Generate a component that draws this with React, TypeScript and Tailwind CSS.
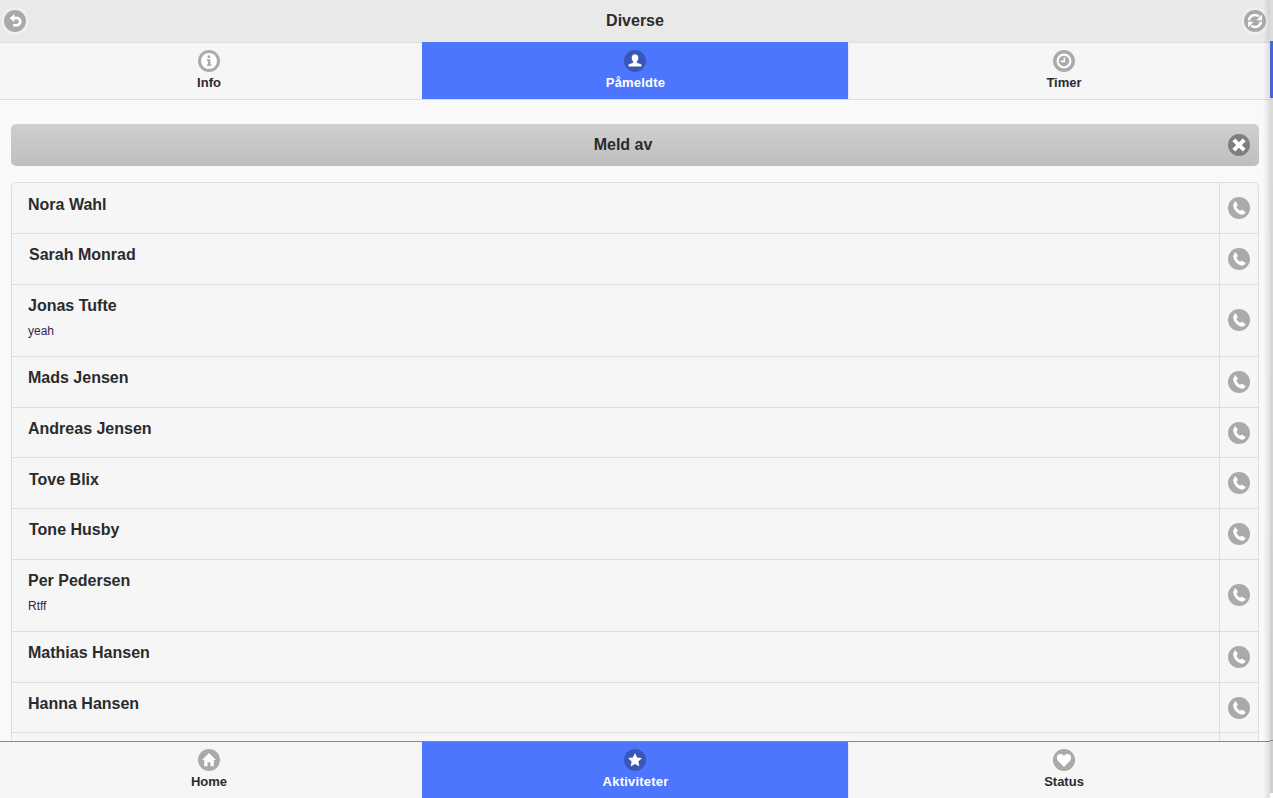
import type { ReactNode } from 'react';

const font = '[font-family:"Liberation_Sans",Arial,sans-serif]';

const icons: Record<string, ReactNode> = {
  back: (
    <path d="M5.600 8.300 10.400 4v2.700h1.900c3.200 0 5.300 2.100 5.300 4.900 0 2.900-2.100 5-5.300 5H9v-2.600h3.300c1.600 0 2.600-1 2.600-2.400s-1-2.400-2.600-2.400h-1.900v2.800z" fill="#fff" />
  ),
  refresh: (
    <>
      <path d="M5 10.400a6.100 6.100 0 0 1 9.900-4" fill="none" stroke="#fff" strokeWidth="2.400" />
      <path d="M18 4.600v5.600h-5.600z" fill="#fff" />
      <path d="M17 11.600a6.100 6.100 0 0 1-9.900 4" fill="none" stroke="#fff" strokeWidth="2.400" />
      <path d="M4 17.400v-5.600h5.600z" fill="#fff" />
    </>
  ),
  info: (
    <>
      <circle cx="11" cy="11" r="8" fill="#fff" />
      <path d="M9.600 5.600h2.600v2.400H9.600zM8.900 9.200h3.500v5.200h1v1.700H8.900v-1.700h1v-3.500h-1z" fill="#aaa" />
    </>
  ),
  user: (
    <path d="M11 4.200c2 0 3.300 1.600 3.300 3.700 0 1.500-.6 2.800-1.500 3.500v1.200c0 .7 3.800 1 4.700 2.300v1.600h-13v-1.600c.9-1.300 4.700-1.600 4.700-2.300v-1.200c-.9-.7-1.500-2-1.500-3.500 0-2.100 1.300-3.700 3.300-3.700z" fill="#fff" />
  ),
  clock: (
    <>
      <circle cx="11" cy="11" r="6.400" fill="none" stroke="#fff" strokeWidth="2.200" />
      <path d="M11.400 7.400V11.400H7.800" fill="none" stroke="#fff" strokeWidth="1.600" />
    </>
  ),
  home: (
    <path d="M11 4 18 11h-2.200v6.200h-3.300v-4h-3v4H6.200v-6.200H4z" fill="#fff" />
  ),
  star: (
    <path d="m11 4 2.100 4.500 4.900.6-3.600 3.400.9 4.900-4.300-2.400-4.300 2.400.9-4.900L4 9.100l4.900-.6z" fill="#fff" />
  ),
  heart: (
    <path d="M11 18 4.900 11.700C3 9.600 3.500 5.500 7 5.100c1.800-.2 3.200.7 4 2 .8-1.300 2.200-2.200 4-2 3.500.4 4 4.500 2.100 6.600z" fill="#fff" />
  ),
  phone: (
    <path d="M6.300 4.600c.5-.4 1.100-.4 1.500.1l1.700 2.400c.3.500.3 1-.1 1.400l-.8.900c-.2.200-.2.400-.1.600.8 1.500 1.800 2.600 3.300 3.700.2.100.4.100.6-.1l.9-.7c.4-.3.900-.3 1.300 0l2.500 1.800c.5.400.5 1 .1 1.400-1.100 1.300-2.600 1.900-4.100 1.400-4.100-1.300-7.100-4.800-7.900-8.500-.3-1.200.2-2.400 1.600-3.800z" fill="#fff" />
  ),
  close: (
    <path d="M7.200 4.400 11 8.200l3.800-3.800 2.800 2.800-3.800 3.800 3.800 3.800-2.800 2.800-3.800-3.800-3.800 3.800-2.800-2.800 3.800-3.800-3.800-3.800z" fill="#fff" />
  ),
};

const Icon = ({ name, dark, fill }: { name: string; dark?: boolean; fill?: string }) => (
  <svg width="22" height="22" viewBox="0 0 22 22" className="block shrink-0">
    <circle cx="11" cy="11" r="11" fill={fill ?? (dark ? '#3a57b8' : '#aaaaaa')} />
    {icons[name]}
  </svg>
);

const Tab = ({ icon, label, className }: { icon: string; label: string; className: string }) => (
  <div className={`flex flex-col items-center text-[#2b2b33] ${className}`}>
    <Icon name={icon} />
    <span className="mt-[2px] text-[13px] leading-[18px] font-bold">{label}</span>
  </div>
);

const ActiveTab = ({ icon, label, className }: { icon: string; label: string; className: string }) => (
  <div className={`flex w-[427px] flex-col items-center border-r border-[#e4e9fb] bg-[#4d76ff] pl-[1px] text-white ${className}`}>
    <div className="-ml-[2px]">
      <Icon name={icon} dark />
    </div>
    <span className="mt-[2px] text-[13px] leading-[18px] font-bold tracking-[0.2px]">{label}</span>
  </div>
);

const people: { name: string; note?: string; h: string; pad: string }[] = [
  { name: 'Nora Wahl', h: 'h-[50px] pt-[12px]', pad: 'pl-[16px]' },
  { name: 'Sarah Monrad', h: 'h-[50px] pt-[11px]', pad: 'pl-[17px]' },
  { name: 'Jonas Tufte', note: 'yeah', h: 'h-[71px] pt-[11px]', pad: 'pl-[16px]' },
  { name: 'Mads Jensen', h: 'h-[50px] pt-[11px]', pad: 'pl-[16px]' },
  { name: 'Andreas Jensen', h: 'h-[49px] pt-[11px]', pad: 'pl-[16px]' },
  { name: 'Tove Blix', h: 'h-[50px] pt-[12px]', pad: 'pl-[17px]' },
  { name: 'Tone Husby', h: 'h-[50px] pt-[11px]', pad: 'pl-[17px]' },
  { name: 'Per Pedersen', note: 'Rtff', h: 'h-[71px] pt-[11px]', pad: 'pl-[16px]' },
  { name: 'Mathias Hansen', h: 'h-[50px] pt-[11px]', pad: 'pl-[16px]' },
  { name: 'Hanna Hansen', h: 'h-[49px] pt-[11px]', pad: 'pl-[16px]' },
  { name: '', h: 'h-[50px]', pad: 'pl-[16px]' },
];

export default function App() {
  return (
    <div className={`${font} relative flex h-[798px] w-[1273px] overflow-hidden bg-white text-[#2b2b2b]`}>
      <div className="flex h-full w-[1270px] shrink-0 flex-col bg-[#f9f9f9]">
        <header className="flex h-[43px] shrink-0 items-center justify-between border-b border-[#dddddd] bg-[#e9e9e9] px-[1px]">
          <div className="rounded-full bg-[#f0f0f0] p-[3px]">
            <Icon name="back" />
          </div>
          <h1 className="text-[16px] font-bold">Diverse</h1>
          <div className="rounded-full bg-[#f0f0f0] p-[3px]">
            <Icon name="refresh" />
          </div>
        </header>

        <nav className="flex h-[57px] shrink-0 border-b border-[#dddddd] bg-[#f6f6f6]">
          <Tab icon="info" label="Info" className="w-[422px] pt-[7px] pr-[4px]" />
          <ActiveTab icon="user" label="Påmeldte" className="-mt-px h-[57px] pt-[8px]" />
          <Tab icon="clock" label="Timer" className="w-[421px] pt-[7px] pl-[9px]" />
        </nav>

        <main className="min-h-0 flex-1 overflow-hidden px-[11px] pt-[24px]">
          <button className="relative flex h-[42px] w-full items-center justify-center rounded-[5px] bg-gradient-to-b from-[#cfcfcf] to-[#bfbfbf] pr-[24px] text-[16px] font-bold">
            Meld av
            <span className="absolute top-[10px] right-[9px]">
              <Icon name="close" fill="#7f7f7f" />
            </span>
          </button>

          <ul className="mt-[16px] rounded-t-[5px] border border-[#dddddd] bg-[#f6f6f6]">
            {people.map((p, i) => (
              <li key={i} className={`flex ${i > 0 ? 'border-t border-[#dddddd]' : ''}`}>
                <div className={`min-w-0 flex-1 ${p.h} ${p.pad}`}>
                  <div className="h-[20px] text-[16px] leading-[20px] font-bold">{p.name}</div>
                  {p.note && <div className="mt-[8px] text-[12px] leading-[14px] text-[#33264d]">{p.note}</div>}
                </div>
                <div className={`flex w-[39px] items-center justify-center border-l border-[#dddddd] ${p.note ? 'pb-[1px]' : ''}`}>
                  <Icon name="phone" />
                </div>
              </li>
            ))}
          </ul>
        </main>

        <footer className="flex h-[57px] shrink-0 border-t border-[#888888] bg-[#f6f6f6]">
          <Tab icon="home" label="Home" className="w-[422px] pt-[7px] pr-[4px]" />
          <ActiveTab icon="star" label="Aktiviteter" className="pt-[7px]" />
          <Tab icon="heart" label="Status" className="w-[421px] pt-[7px] pl-[9px]" />
        </footer>
      </div>

      <div className="flex h-[793px] w-[3px] shrink-0 flex-col bg-gradient-to-b from-[#dcdcdc] to-[#cfcfcf]">
        <div className="mt-[41px] h-[57px] bg-[#4566d4]" />
        <div className="mt-[642px] h-px bg-[#888888]" />
      </div>

      {/* soft shadow down the right edge of the page */}
      <div className="pointer-events-none absolute top-0 right-[3px] h-full w-[7px] bg-gradient-to-r from-transparent to-black/10" />
    </div>
  );
}
